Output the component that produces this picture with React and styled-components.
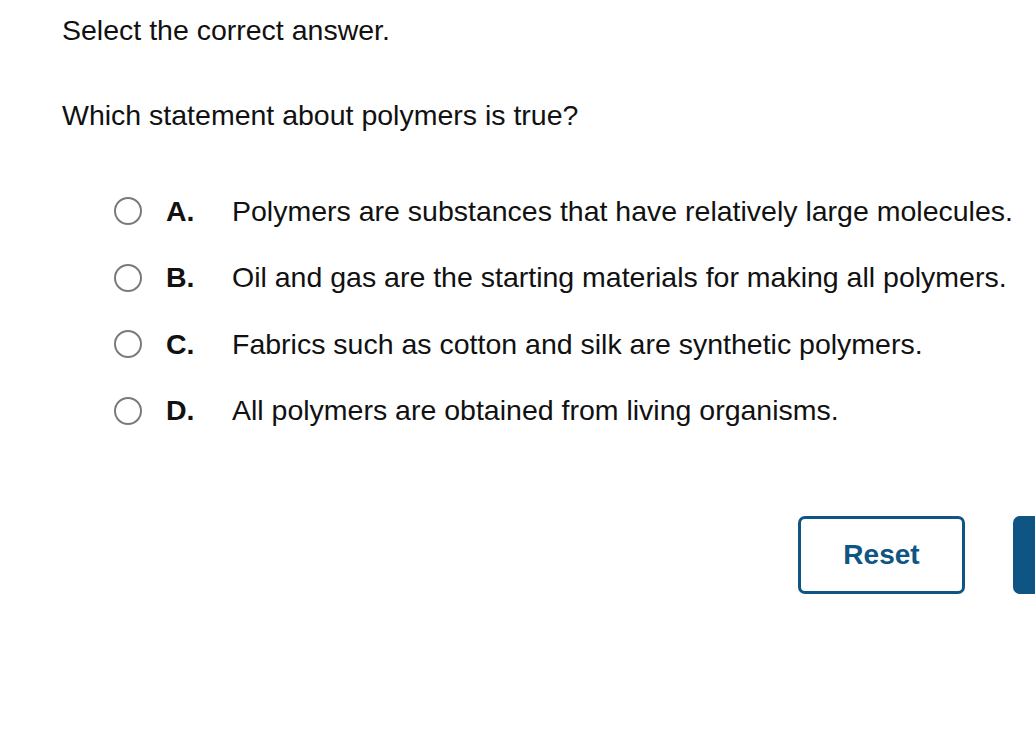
import React from "react";
import styled, { createGlobalStyle } from "styled-components";

const GlobalStyle = createGlobalStyle`
  body {
    margin: 0;
    background: #fff;
    font-family: "Liberation Sans", Arial, sans-serif;
    color: #111;
  }
`;

const options = [
  { letter: "A.", text: "Polymers are substances that have relatively large molecules." },
  { letter: "B.", text: "Oil and gas are the starting materials for making all polymers." },
  { letter: "C.", text: "Fabrics such as cotton and silk are synthetic polymers." },
  { letter: "D.", text: "All polymers are obtained from living organisms." }
];

export default function App() {
  return (
    <Page>
      <GlobalStyle />
      <Prompt>Select the correct answer.</Prompt>
      <Question>Which statement about polymers is true?</Question>
      <OptionList>
        {options.map(option => (
          <Option key={option.letter}>
            <Radio />
            <Letter>{option.letter}</Letter>
            <OptionText>{option.text}</OptionText>
          </Option>
        ))}
      </OptionList>
      <Actions>
        <ResetBtn>Reset</ResetBtn>
        <NextBtn aria-label="Next" />
      </Actions>
    </Page>
  );
}

const Page = styled.div`
  width: 1035px;
  height: 736px;
  overflow: hidden;
  padding: 14px 0 0 62px;
  box-sizing: border-box;
`;
const Prompt = styled.div`
  font-size: 28.5px;
  line-height: 32px;
`;
const Question = styled.div`
  font-size: 28.5px;
  line-height: 32px;
  margin-top: 53px;
`;
const OptionList = styled.div`
  display: flex;
  flex-direction: column;
  gap: 34.6px;
  margin-top: 64px;
  padding-left: 52px;
`;
const Option = styled.div`
  display: flex;
  align-items: center;
  height: 32px;
  font-size: 28.5px;
  white-space: nowrap;
`;
const Radio = styled.span`
  width: 28px;
  height: 28px;
  border: 2px solid #7a7a7a;
  border-radius: 50%;
  box-sizing: border-box;
  flex-shrink: 0;
`;
const Letter = styled.span`
  font-weight: bold;
  width: 66px;
  margin-left: 24px;
`;
const OptionText = styled.span``;
const Actions = styled.div`
  display: flex;
  gap: 48px;
  margin-top: 89px;
  padding-left: 736px;
`;
const Btn = styled.button`
  flex-shrink: 0;
  width: 167px;
  height: 78px;
  border-radius: 7px;
  border: 3px solid #0f5583;
  font-family: "Liberation Sans", Arial, sans-serif;
  font-size: 28px;
  font-weight: bold;
`;
const ResetBtn = styled(Btn)`
  background: #fff;
  color: #0f5583;
`;
const NextBtn = styled(Btn)`
  background: #0f5583;
  color: #fff;
`;
